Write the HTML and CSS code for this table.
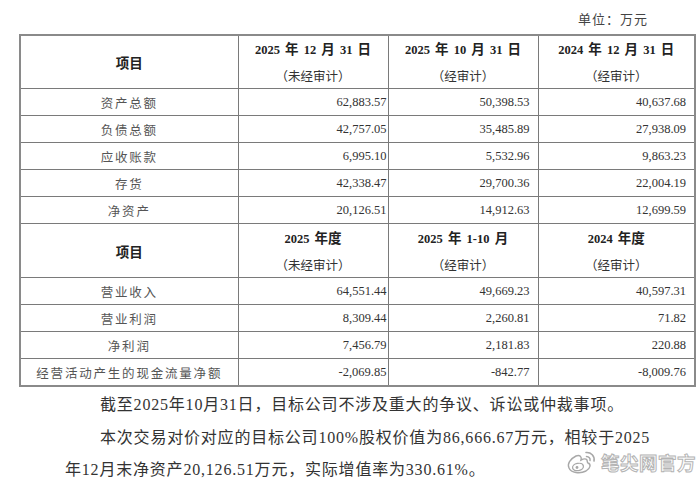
FILE: index.html
```html
<!DOCTYPE html>
<html lang="zh">
<head>
<meta charset="utf-8">
<link rel="stylesheet" href="styles.css">
</head>
<body>
<div class="page">
  <div class="unit">单位：万元</div>
  <table class="fin">
    <colgroup><col class="c1"><col class="c2"><col class="c3"><col class="c4"></colgroup>
    <tr class="head">
      <th class="item">项目</th>
      <th><div class="hl1">2025 <span class="cj">年</span> 12 <span class="cj">月</span> 31 <span class="cj">日</span></div><div class="hl2">（未经审计）</div></th>
      <th><div class="hl1">2025 <span class="cj">年</span> 10 <span class="cj">月</span> 31 <span class="cj">日</span></div><div class="hl2">（经审计）</div></th>
      <th><div class="hl1">2024 <span class="cj">年</span> 12 <span class="cj">月</span> 31 <span class="cj">日</span></div><div class="hl2">（经审计）</div></th>
    </tr>
    <tr class="row"><td class="lbl">资产总额</td><td class="num n2">62,883.57</td><td class="num">50,398.53</td><td class="num">40,637.68</td></tr>
    <tr class="row"><td class="lbl">负债总额</td><td class="num n2">42,757.05</td><td class="num">35,485.89</td><td class="num">27,938.09</td></tr>
    <tr class="row"><td class="lbl">应收账款</td><td class="num n2">6,995.10</td><td class="num">5,532.96</td><td class="num">9,863.23</td></tr>
    <tr class="row"><td class="lbl">存货</td><td class="num n2">42,338.47</td><td class="num">29,700.36</td><td class="num">22,004.19</td></tr>
    <tr class="row"><td class="lbl">净资产</td><td class="num n2">20,126.51</td><td class="num">14,912.63</td><td class="num">12,699.59</td></tr>
    <tr class="head head2">
      <th class="item">项目</th>
      <th><div class="hl1">2025 <span class="cj">年度</span></div><div class="hl2">（未经审计）</div></th>
      <th><div class="hl1">2025 <span class="cj">年</span> 1-10 <span class="cj">月</span></div><div class="hl2">（经审计）</div></th>
      <th><div class="hl1">2024 <span class="cj">年度</span></div><div class="hl2">（经审计）</div></th>
    </tr>
    <tr class="row"><td class="lbl">营业收入</td><td class="num n2">64,551.44</td><td class="num">49,669.23</td><td class="num">40,597.31</td></tr>
    <tr class="row"><td class="lbl">营业利润</td><td class="num n2">8,309.44</td><td class="num">2,260.81</td><td class="num">71.82</td></tr>
    <tr class="row"><td class="lbl">净利润</td><td class="num n2">7,456.79</td><td class="num">2,181.83</td><td class="num">220.88</td></tr>
    <tr class="row"><td class="lbl">经营活动产生的现金流量净额</td><td class="num n2">-2,069.85</td><td class="num">-842.77</td><td class="num">-8,009.76</td></tr>
  </table>
  <p class="para">截至2025年10月31日，目标公司不涉及重大的争议、诉讼或仲裁事项。</p>
  <p class="para">本次交易对价对应的目标公司100%股权价值为86,666.67万元，相较于2025年12月末净资产20,126.51万元，实际增值率为330.61%。</p>
  <div class="wm">
    <svg class="wb" width="32" height="26" viewBox="0 0 32 26">
      <path d="M10 7 C4 10 1 15 3 19 C5 24 14 25 20 22 C25 19 25 15 22 14 C21 13.6 21.5 12 21 11 C20 9.5 17 10 15 11 C16 8 14 5.5 10 7 Z" fill="#fff" stroke="#a8a8a8" stroke-width="1.4"/>
      <ellipse cx="12" cy="18" rx="5.5" ry="3.6" fill="#fff" stroke="#a8a8a8" stroke-width="1.3" transform="rotate(-12 12 18)"/>
      <circle cx="11" cy="18.5" r="1.4" fill="#a8a8a8"/>
      <path d="M20 3.5 C25 3 29 7 28 12" fill="none" stroke="#a8a8a8" stroke-width="1.6" stroke-linecap="round"/>
      <path d="M20.5 7.5 C23 7.5 24.5 9.5 24 11.5" fill="none" stroke="#a8a8a8" stroke-width="1.5" stroke-linecap="round"/>
    </svg>
    <span class="wmtext">笔尖网官方</span>
  </div>
</div>
</body>
</html>
```
FILE: styles.css
```css
body {
  margin: 0;
  background: #ffffff;
}

.page {
  position: relative;
  width: 700px;
  height: 481px;
  overflow: hidden;
  font-family: "Liberation Serif", "Noto Sans CJK SC", serif;
  color: #222;
}

.unit {
  display: flex;
  justify-content: flex-end;
  padding: 9px 52px 0 0;
  height: 20px;
  line-height: 20px;
  font-family: "Noto Sans CJK SC", sans-serif;
  font-size: 13px;
  letter-spacing: 1px;
  color: #444;
}

.fin {
  margin: 5px 0 0 19px;
  width: 675px;
  border-collapse: collapse;
  table-layout: fixed;
  border: 2px solid #8a8a8a;
}

.c1 { width: 218px; }
.c2 { width: 150px; }
.c3 { width: 150px; }
.c4 { width: 157px; }

.fin th,
.fin td {
  border: 1px solid #7a7a7a;
  padding: 0;
}

.head th {
  height: 52px;
  text-align: center;
  vertical-align: middle;
  font-weight: normal;
}

.head2 th {
  height: 53px;
}

.item {
  font-family: "Noto Sans CJK SC", sans-serif;
  font-weight: 700 !important;
  font-size: 13.5px;
  color: #222;
}

.hl1 {
  font-family: "Liberation Serif", "Noto Sans CJK SC", serif;
  font-weight: 700;
  font-size: 12.5px;
  word-spacing: 2px;
  line-height: 25px;
  color: #222;
}

.hl1 .cj {
  font-family: "Noto Sans CJK SC", sans-serif;
  font-size: 13.5px;
}

.hl2 {
  font-family: "Noto Sans CJK SC", sans-serif;
  font-size: 12.5px;
  line-height: 25px;
  color: #333;
}

.row td {
  height: 26px;
}

.lbl {
  text-align: center;
  font-family: "Noto Sans CJK SC", sans-serif;
  font-size: 12.5px;
  letter-spacing: 1.8px;
  color: #555;
}

.num {
  text-align: right;
  padding-right: 8px !important;
  font-family: "Liberation Serif", serif;
  font-size: 12.5px;
  color: #333;
}

.num.n2 {
  padding-right: 1px !important;
}

.para {
  margin: 0 0 0 65px;
  width: 592px;
  text-indent: 35px;
  font-family: "Liberation Serif", "Noto Sans CJK SC", serif;
  font-size: 16px;
  letter-spacing: 0.8px;
  line-height: 32.5px;
  color: #333;
}

.para:first-of-type {
  margin-top: 2px;
}

.wm {
  position: absolute;
  left: 566px;
  top: 449px;
  display: flex;
  align-items: center;
  gap: 3px;
}

.wmtext {
  font-family: "Noto Sans CJK SC", sans-serif;
  font-weight: 700;
  font-size: 18.5px;
  line-height: 19px;
  letter-spacing: 0.5px;
  color: #ffffff;
  -webkit-text-stroke: 1px #b4b4b4;
}
```
